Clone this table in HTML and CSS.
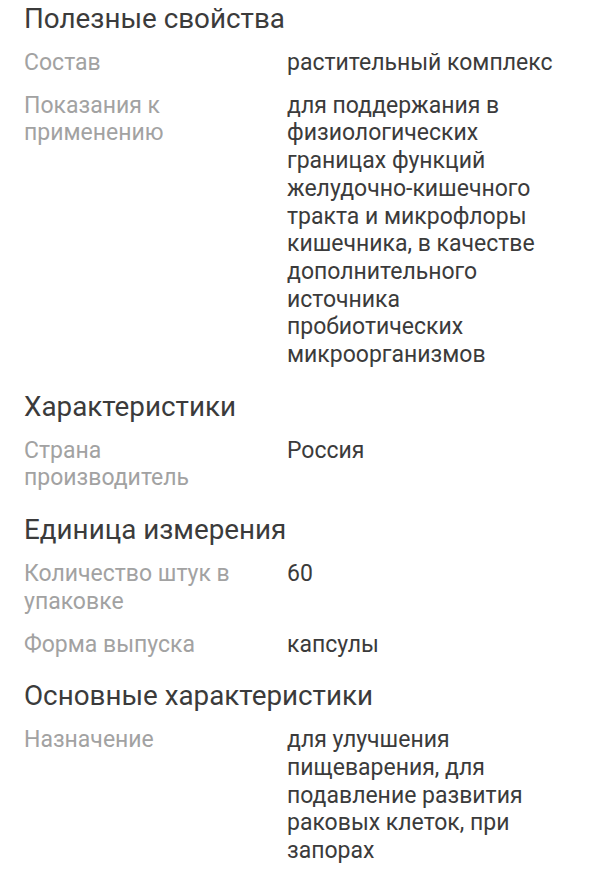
FILE: index.html
```html
<!DOCTYPE html>
<html lang="ru">
<head>
<meta charset="utf-8">
<link rel="stylesheet" href="styles.css">
</head>
<body>
<div class="page">
  <section class="group">
    <h2 class="group-title">Полезные свойства</h2>
    <div class="row"><div class="label">Состав</div><div class="value">растительный комплекс</div></div>
    <div class="row"><div class="label">Показания к применению</div><div class="value">для поддержания в физиологических границах функций желудочно-кишечного тракта и микрофлоры кишечника, в качестве дополнительного источника пробиотических микроорганизмов</div></div>
  </section>
  <section class="group">
    <h2 class="group-title">Характеристики</h2>
    <div class="row"><div class="label">Страна производитель</div><div class="value">Россия</div></div>
  </section>
  <section class="group">
    <h2 class="group-title">Единица измерения</h2>
    <div class="row"><div class="label">Количество штук в упаковке</div><div class="value">60</div></div>
    <div class="row"><div class="label">Форма выпуска</div><div class="value">капсулы</div></div>
  </section>
  <section class="group">
    <h2 class="group-title">Основные характеристики</h2>
    <div class="row"><div class="label">Назначение</div><div class="value">для улучшения пищеварения, для подавление развития раковых клеток, при запорах</div></div>
  </section>
</div>
</body>
</html>
```
FILE: styles.css
```css
html, body {
  margin: 0;
  padding: 0;
  background: #ffffff;
}
body {
  font-family: Roboto, "Noto Sans", sans-serif;
}
.page {
  padding: 2px 24px 0 24px;
}
.group + .group {
  margin-top: 21px;
}
.group-title {
  margin: 0 0 13px 0;
  font-size: 27.8px;
  line-height: 34px;
  font-weight: 400;
  color: #3b3b3b;
}
.row {
  display: grid;
  grid-template-columns: 239px 1fr;
  column-gap: 24px;
  font-size: 23px;
  line-height: 27.7px;
}
.row + .row {
  margin-top: 15px;
}
.label {
  color: #a2a2a2;
}
.value {
  color: #3b3b3b;
}
```
